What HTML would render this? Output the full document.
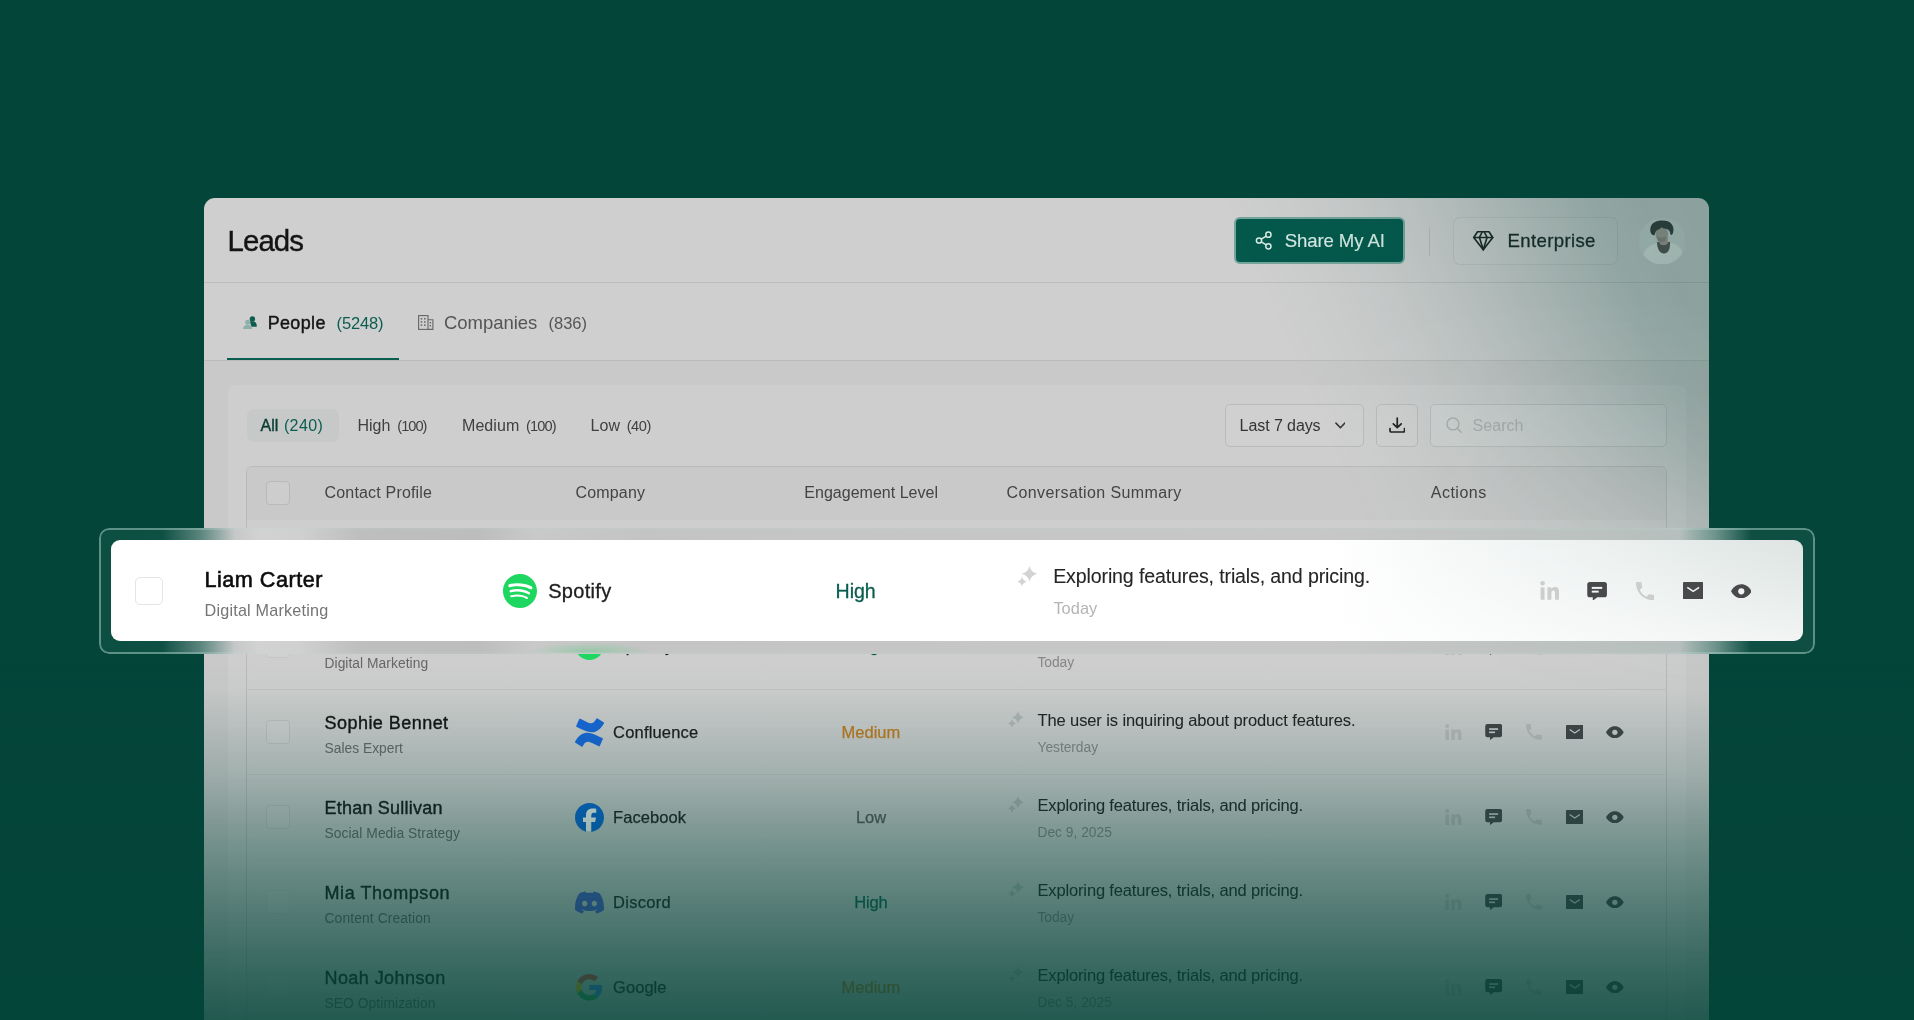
<!DOCTYPE html>
<html lang="en">
<head>
<meta charset="utf-8">
<title>Leads</title>
<style>
*{box-sizing:border-box;margin:0;padding:0}
html,body{width:1914px;height:1020px;overflow:hidden}
body{background:#04453a;font-family:"Liberation Sans",sans-serif;position:relative}
.abs{position:absolute}
.t{position:absolute;white-space:nowrap;line-height:1}
#cardclip{position:absolute;left:204px;top:198px;width:1505px;height:830px;border-radius:11px 11px 0 0;overflow:hidden}
#cardin{position:absolute;left:-204px;top:-198px;width:1914px;height:1020px;will-change:transform}
#hlwrap{position:absolute;left:0;top:0;width:1914px;height:1020px;will-change:transform}
#cardbg{position:absolute;left:204px;top:198px;width:1505px;height:830px;background:#cfcfcf}
.hline{position:absolute;left:204px;width:1505px;height:1px;background:#bcbcbc}
#band{position:absolute;left:204px;top:361px;width:1505px;height:700px;background:#c9c9c9}
#panel{position:absolute;left:228px;top:385px;width:1458px;height:700px;background:#cecece;border-radius:8px}
#table{position:absolute;left:246px;top:466px;width:1421px;height:700px;border:1px solid #b9b9b9;border-radius:6px;background:#cecece;overflow:hidden}
#thead{position:absolute;left:0;top:0;width:1421px;height:53px;background:#c9c9c9}
.cb{position:absolute;left:266px;width:24px;height:24px;border:1px solid #bcbcbc;border-radius:4px;background:#d1d1d1}
.rowline{position:absolute;left:247px;width:1419px;height:1px;background:#c1c1c1}
.box{position:absolute;border:1px solid #bbb;border-radius:5px;background:#d0d0d0}
#tint{position:absolute;left:204px;top:198px;width:1505px;height:830px;pointer-events:none;background:linear-gradient(246.3deg,rgba(4,69,58,0.335) 0.00%,rgba(4,69,58,0.33) 3.21%,rgba(4,69,58,0.3) 6.42%,rgba(4,69,58,0.235) 9.63%,rgba(4,69,58,0.17) 12.84%,rgba(4,69,58,0.11) 16.05%,rgba(4,69,58,0.06) 19.26%,rgba(4,69,58,0.02) 23.00%,rgba(4,69,58,0) 26.21%);-webkit-mask-image:linear-gradient(180deg,rgba(0,0,0,1) 0.00%,rgba(0,0,0,1) 12.29%,rgba(0,0,0,0.9) 24.34%,rgba(0,0,0,0.78) 30.96%,rgba(0,0,0,0.56) 38.80%,rgba(0,0,0,0.25) 48.43%,rgba(0,0,0,0.07) 55.66%,rgba(0,0,0,0) 60.48%);mask-image:linear-gradient(180deg,rgba(0,0,0,1) 0.00%,rgba(0,0,0,1) 12.29%,rgba(0,0,0,0.9) 24.34%,rgba(0,0,0,0.78) 30.96%,rgba(0,0,0,0.56) 38.80%,rgba(0,0,0,0.25) 48.43%,rgba(0,0,0,0.07) 55.66%,rgba(0,0,0,0) 60.48%)}
#fade{position:absolute;left:0;top:660px;width:1914px;height:360px;pointer-events:none;background:linear-gradient(180deg,rgba(4,69,58,0) 0.0%,rgba(4,69,58,0.02) 8.3%,rgba(4,69,58,0.12) 20.3%,rgba(4,69,58,0.22) 31.9%,rgba(4,69,58,0.38) 46.1%,rgba(4,69,58,0.5) 58.3%,rgba(4,69,58,0.63) 72.2%,rgba(4,69,58,0.75) 86.1%,rgba(4,69,58,0.85) 100.0%)}
#glass{position:absolute;left:99px;top:528px;width:1716px;height:125.500px;border-radius:10px;background:linear-gradient(90deg,#0d4e43 0.00%,#0f5045 3.70%,#5a857d 5.90%,#c6c8c8 7.93%,#d2d2d2 9.33%,#d0d0d0 11.67%,#bebebe 15.17%,#bdbdbd 22.17%,#c9c9c9 25.38%,#c4c4c4 31.51%,#c6c6c6 52.51%,#c7c7c7 71.18%,#bcc2c0 85.18%,#b6bfbd 92.10%,#6d948c 94.20%,#0e4e43 96.30%,#0e4e43 100.00%)}
#glassb{position:absolute;left:99px;top:528px;width:1716px;height:125.500px;border-radius:10px;border:2px solid rgba(190,226,218,.45);-webkit-mask-image:linear-gradient(90deg,#000 0%,#000 4%,rgba(0,0,0,.3) 9%,rgba(0,0,0,.3) 91%,#000 95.5%,#000 100%);mask-image:linear-gradient(90deg,#000 0%,#000 4%,rgba(0,0,0,.3) 9%,rgba(0,0,0,.3) 91%,#000 95.5%,#000 100%)}
#hl{position:absolute;left:111px;top:540px;width:1692px;height:101px;border-radius:9px;background:linear-gradient(180deg,rgba(255,255,255,0) 0%,rgba(255,255,255,.25) 45%,rgba(255,255,255,.6) 100%),linear-gradient(90deg,#fff 0%,#fff 72%,#f6f8f8 79%,#eaefee 90%,#dde4e2 100%)}
.hcb{position:absolute;left:135.200px;top:577px;width:27.600px;height:27.600px;border:1px solid #e4e4e4;border-radius:5px;background:#fff}
</style>
</head>
<body>
<div id="cardclip"><div id="cardin">
<div id="cardbg"></div>
<div class="hline" style="top:282px"></div>
<div class="hline" style="top:360px"></div>
<div id="band"></div><div id="panel"></div>
<div id="table"><div id="thead"></div></div>
<div class="abs" style="left:227px;top:357.500px;width:171.500px;height:2.500px;background:#0b5e4f"></div>
<div class="abs" style="left:1234px;top:217px;width:171px;height:47px;border-radius:6px;background:#04594c;border:2px solid #74a59b"></div>
<svg class="abs" style="left:1254.5px;top:231.0px" width="18.0" height="19.0" viewBox="0 0 18 19" ><g fill="none" stroke="#d9ebe7" stroke-width="1.500"><circle cx="13.400" cy="3.700" r="2.600"/><circle cx="4" cy="9.500" r="2.600"/><circle cx="13.400" cy="15.300" r="2.600"/><path d="M6.300 8.100l4.900-3M6.300 10.900l4.900 3"/></g></svg>
<div class="abs" style="left:1429px;top:228px;width:1px;height:28px;background:#b4bcba"></div>
<div class="abs" style="left:1452.500px;top:216.500px;width:165px;height:48px;border-radius:7px;border:1px solid rgba(110,135,130,.17);background:rgba(255,255,255,.04)"></div>
<svg class="abs" style="left:1471.7px;top:231.4px" width="22.5" height="19.6" viewBox="1.500 2.200 21 20.600" ><g fill="none" stroke="#1b2422" stroke-width="1.700" stroke-linejoin="round" stroke-linecap="round"><path d="M6 3h12l4 6-10 13L2 9Z"/><path d="M11 3 8 9l4 13 4-13-3-6"/><path d="M2 9h20"/></g></svg>
<svg class="abs" style="left:1638.5px;top:217.5px" width="46.5" height="46.5" viewBox="0 0 46.500 46.500" ><defs><clipPath id="av"><circle cx="23.250" cy="23.250" r="23.250"/></clipPath></defs><g clip-path="url(#av)"><rect width="46.500" height="46.500" fill="#d4d7d6"/><path d="M3 47C3 34 8 27.500 17 25.500L20 24.500C22 30 28 30 31 24.500L34 25.500C42 27.500 45 34 45 47Z" fill="#e9e9e7"/><path d="M18 24C18 31 21 35.500 25 35.500C29 35.500 31.500 31 31 24Z" fill="#5d5252"/><path d="M20.500 19h8.300v6.500c-2 2.200-6.300 2.200-8.300 0z" fill="#b39a96"/><ellipse cx="22.800" cy="15.800" rx="6.200" ry="8.500" fill="#ad9d98"/><path d="M18 18.500c2.500 1.500 6.500 1.500 9 0l-.8 4.500c-2 1.500-5.500 1.500-7.500 0z" fill="#8d7f7b" opacity=".7"/><path d="M11.400 13.500C10.300 6 16 2.300 23 2.500C30.500 2.300 35.600 6.500 34.300 13.500C34 16 33 17.200 31.600 16.800C31.300 14 30.500 12.500 28.500 11.300C26.500 10.300 24 11 22.800 9.300C21.500 11 18.800 11.500 17.300 12.800C16.300 14 16.300 15.500 15.500 17.200C13.500 17.500 11.800 16 11.400 13.500Z" fill="#3a3839"/></g></svg>
<svg class="abs" style="left:242.5px;top:315.5px" width="14.5" height="13.5" viewBox="0 0 14.500 13.500" ><g><circle cx="9.400" cy="2.900" r="2.700" fill="#0b5e4f"/><path d="M6.800 5.500c1.600-.6 4.200-.4 5.400.6 1.300 1.100 1.700 3 1.600 4.600h-5.300z" fill="#0b5e4f"/><circle cx="4.600" cy="6.300" r="2.500" fill="#8fb0a9"/><path d="M0 13.500c0-2.900 1.800-4.800 4.600-4.800s4.600 1.900 4.600 4.800z" fill="#8fb0a9"/></g></svg>
<svg class="abs" style="left:418.0px;top:315.0px" width="15.5" height="15.0" viewBox="0 0 15.500 15" ><g fill="none" stroke="#666" stroke-width="1.100"><rect x=".6" y=".6" width="9.400" height="13.800"/><path d="M10 4.800h4.900v9.600H10"/></g><g fill="#666"><rect x="2.700" y="3" width="1.600" height="1.500"/><rect x="6" y="3" width="1.600" height="1.500"/><rect x="2.700" y="6.200" width="1.600" height="1.500"/><rect x="6" y="6.200" width="1.600" height="1.500"/><rect x="2.700" y="9.400" width="1.600" height="1.500"/><rect x="6" y="9.400" width="1.600" height="1.500"/><rect x="11.600" y="7" width="1.500" height="1.400"/><rect x="11.600" y="10" width="1.500" height="1.400"/></g></svg>
<div class="abs" style="left:246.500px;top:409px;width:92px;height:33px;border-radius:7px;background:#c7c8c8"></div>
<div class="box" style="left:1225px;top:404px;width:139px;height:43px"></div>
<svg class="abs" style="left:1334.6px;top:421.8px" width="10.8" height="7.1" viewBox="0 0 11.500 7.500" ><path d="M1 1.200l4.750 4.800L10.500 1.200" fill="none" stroke="#333" stroke-width="1.600" stroke-linecap="round" stroke-linejoin="round"/></svg>
<div class="box" style="left:1375.500px;top:404px;width:42.500px;height:43px"></div>
<svg class="abs" style="left:1388.5px;top:416.8px" width="16.5" height="16.0" viewBox="0 0 16.500 16" ><g fill="none" stroke="#222" stroke-width="1.700" stroke-linecap="round" stroke-linejoin="round"><path d="M8.250 1v9.500M4.300 6.800l3.950 3.900 3.950-3.900M1 11.500v2.300a1.200 1.200 0 0 0 1.200 1.200h12.100a1.200 1.200 0 0 0 1.200-1.200v-2.300"/></g></svg>
<div class="box" style="left:1430px;top:404px;width:237px;height:43px;border-color:#b9bebd;background:rgba(212,214,214,.55)"></div>
<svg class="abs" style="left:1445.5px;top:416.9px" width="16.2" height="16.2" viewBox="0 0 17 17" ><g fill="none" stroke="#a9aead" stroke-width="1.400" stroke-linecap="round"><circle cx="7.300" cy="7.300" r="6.300"/><path d="M12 12l4 4"/></g></svg>
<div class="cb" style="top:480.500px;background:#cdcdcd;border-color:#b9b9b9"></div>
<div class="cb" style="top:633.7px;border-color:#c6c6c6"></div>
<svg class="abs" style="left:575.0px;top:631.2px" width="29.0" height="29.0" viewBox="0 0 24 24" ><circle cx="12" cy="12" r="11.5" fill="#fff"/><path fill="#1ed760" d="M12 0C5.4 0 0 5.4 0 12s5.4 12 12 12 12-5.4 12-12S18.66 0 12 0zm5.521 17.34c-.24.359-.66.48-1.021.24-2.82-1.74-6.36-2.101-10.561-1.141-.418.122-.779-.179-.899-.539-.12-.421.18-.78.54-.9 4.56-1.021 8.52-.6 11.64 1.32.42.18.479.659.301 1.02zm1.44-3.3c-.301.42-.841.6-1.262.3-3.239-1.98-8.159-2.58-11.939-1.38-.479.12-1.02-.12-1.14-.6-.12-.48.12-1.021.6-1.141C9.6 9.9 15 10.561 18.72 12.84c.361.181.54.78.241 1.2zm.12-3.36C15.24 8.4 8.82 8.16 5.16 9.301c-.6.179-1.2-.181-1.38-.721-.18-.601.18-1.2.72-1.381 4.26-1.26 11.28-1.02 15.721 1.621.539.3.719 1.02.419 1.56-.299.421-1.02.599-1.559.3z"/></svg>
<svg class="abs" style="left:1007.8px;top:626.4px" width="16.5" height="16.5" viewBox="0 0 16.500 16.500" ><g fill="#b0b5b4"><path d="M10 0.0Q11.15 5.15 16.3 6.3Q11.15 7.449999999999999 10 12.6Q8.85 7.449999999999999 3.7 6.3Q8.85 5.15 10 0.0Z"/><path d="M4 8.6Q4.8 11.7 7.9 12.5Q4.8 13.3 4 16.4Q3.2 13.3 0.10000000000000009 12.5Q3.2 11.7 4 8.6Z"/></g></svg>
<svg class="abs" style="left:1445.2px;top:638.9px" width="16.5" height="16.2" viewBox="0 0 19 19" ><g fill="#b9b9b9"><circle cx="2.4" cy="2.3" r="2.3"/><rect x="0.4" y="6.4" width="4" height="12.6"/><path d="M7.3 6.4h3.8v1.8c.7-1.2 2-2.1 3.9-2.1 3.3 0 4 2.2 4 5.2V19h-4v-6.8c0-1.5-.3-2.6-1.7-2.6-1.500 0-2 1.100-2 2.600V19h-4z"/></g></svg>
<svg class="abs" style="left:1484.9px;top:639.1px" width="17.4" height="16.1" viewBox="0 0 20 19" ><path fill="#434446" d="M2.6 0h14.800a2.600 2.600 0 0 1 2.600 2.600v10.400a2.600 2.600 0 0 1 -2.600 2.600H10.200L5.600 19v-3.400H2.600a2.600 2.600 0 0 1 -2.600 -2.600V2.600a2.600 2.600 0 0 1 2.600 -2.600z"/><rect x="4.600" y="5" width="10.600" height="2" fill="#cecece"/><rect x="4.600" y="8.800" width="7" height="2" fill="#cecece"/></svg>
<svg class="abs" style="left:1526.3px;top:639.1px" width="15.8" height="15.8" viewBox="3 3 18 18" ><path fill="#b9b9b9" d="M6.62 10.790c1.440 2.830 3.760 5.140 6.590 6.590l2.200-2.200c.27-.27.67-.36 1.020-.24 1.120.37 2.330.57 3.570.57.55 0 1 .45 1 1V20c0 .55-.45 1-1 1-9.390 0-17-7.610-17-17 0-.55.45-1 1-1h3.500c.55 0 1 .45 1 1 0 1.250.2 2.450.57 3.570.11.35.03.74-.25 1.020l-2.200 2.200z"/></svg>
<svg class="abs" style="left:1565.7px;top:639.6px" width="17.5" height="14.9" viewBox="0 0 20 17" ><rect x="0" y="0" width="20" height="17" rx="1" fill="#434446"/><path d="M4.200 5.200l5.800 4 5.800-4" fill="none" stroke="#cecece" stroke-width="1.500"/></svg>
<svg class="abs" style="left:1605.9px;top:640.7px" width="17.7" height="12.6" viewBox="0 0 22 15" ><path fill="#434446" d="M11 0C6 0 2.200 3.300 0 7.500C2.200 11.700 6 15 11 15C16 15 19.800 11.700 22 7.500C19.800 3.300 16 0 11 0z"/><circle cx="11" cy="7.500" r="3.300" fill="#cecece"/></svg>
<div class="rowline" style="top:689px;background:#c2c2c2"></div>
<div class="cb" style="top:720px;border-color:#c0c0c0"></div>
<svg class="abs" style="left:575.0px;top:717.5px" width="29.0" height="29.0" viewBox="0 0 24 24" ><path fill="#1868db" d="M.87 18.257c-.248.382-.53.875-.763 1.245a.764.764 0 0 0 .255 1.04l4.965 3.054a.764.764 0 0 0 1.058-.26c.199-.332.454-.763.733-1.221 1.967-3.247 3.945-2.853 7.508-1.146l4.957 2.337a.764.764 0 0 0 1.028-.382l2.364-5.346a.764.764 0 0 0-.382-1 599.851 599.851 0 0 1-4.965-2.361C10.911 10.97 5.224 11.185.87 18.257zM23.131 5.743c.249-.405.531-.875.764-1.25a.764.764 0 0 0-.256-1.034L18.675.404a.764.764 0 0 0-1.058.26c-.195.335-.451.763-.734 1.225-1.966 3.246-3.945 2.85-7.508 1.146L4.437.694a.764.764 0 0 0-1.027.382L1.046 6.422a.764.764 0 0 0 .382 1c1.039.49 3.105 1.467 4.965 2.361 6.698 3.246 12.392 3.029 16.738-4.04z"/></svg>
<svg class="abs" style="left:1007.8px;top:711.4px" width="16.5" height="16.5" viewBox="0 0 16.500 16.500" ><g fill="#b0b5b4"><path d="M10 0.0Q11.15 5.15 16.3 6.3Q11.15 7.449999999999999 10 12.6Q8.85 7.449999999999999 3.7 6.3Q8.85 5.15 10 0.0Z"/><path d="M4 8.6Q4.8 11.7 7.9 12.5Q4.8 13.3 4 16.4Q3.2 13.3 0.10000000000000009 12.5Q3.2 11.7 4 8.6Z"/></g></svg>
<svg class="abs" style="left:1445.2px;top:723.9px" width="16.5" height="16.2" viewBox="0 0 19 19" ><g fill="#b9b9b9"><circle cx="2.4" cy="2.3" r="2.3"/><rect x="0.4" y="6.4" width="4" height="12.6"/><path d="M7.3 6.4h3.8v1.8c.7-1.2 2-2.1 3.9-2.1 3.3 0 4 2.2 4 5.2V19h-4v-6.8c0-1.5-.3-2.6-1.7-2.6-1.500 0-2 1.100-2 2.600V19h-4z"/></g></svg>
<svg class="abs" style="left:1484.9px;top:724.1px" width="17.4" height="16.1" viewBox="0 0 20 19" ><path fill="#434446" d="M2.6 0h14.800a2.600 2.600 0 0 1 2.600 2.600v10.400a2.600 2.600 0 0 1 -2.600 2.600H10.200L5.600 19v-3.400H2.600a2.600 2.600 0 0 1 -2.600 -2.600V2.600a2.600 2.600 0 0 1 2.600 -2.600z"/><rect x="4.600" y="5" width="10.600" height="2" fill="#cecece"/><rect x="4.600" y="8.800" width="7" height="2" fill="#cecece"/></svg>
<svg class="abs" style="left:1526.3px;top:724.1px" width="15.8" height="15.8" viewBox="3 3 18 18" ><path fill="#b9b9b9" d="M6.62 10.790c1.440 2.830 3.760 5.140 6.590 6.590l2.200-2.200c.27-.27.67-.36 1.020-.24 1.120.37 2.330.57 3.570.57.55 0 1 .45 1 1V20c0 .55-.45 1-1 1-9.390 0-17-7.610-17-17 0-.55.45-1 1-1h3.500c.55 0 1 .45 1 1 0 1.250.2 2.450.57 3.570.11.35.03.74-.25 1.020l-2.200 2.200z"/></svg>
<svg class="abs" style="left:1565.7px;top:724.6px" width="17.5" height="14.9" viewBox="0 0 20 17" ><rect x="0" y="0" width="20" height="17" rx="1" fill="#434446"/><path d="M4.200 5.200l5.800 4 5.800-4" fill="none" stroke="#cecece" stroke-width="1.500"/></svg>
<svg class="abs" style="left:1605.9px;top:725.7px" width="17.7" height="12.6" viewBox="0 0 22 15" ><path fill="#434446" d="M11 0C6 0 2.200 3.300 0 7.500C2.200 11.700 6 15 11 15C16 15 19.800 11.700 22 7.500C19.800 3.300 16 0 11 0z"/><circle cx="11" cy="7.500" r="3.300" fill="#cecece"/></svg>
<div class="rowline" style="top:774px;background:#c5c5c5"></div>
<div class="cb" style="top:805px;border-color:#c2c2c2"></div>
<svg class="abs" style="left:575.0px;top:802.5px" width="29.0" height="29.0" viewBox="0 0 24 24" ><circle cx="12" cy="12" r="11.5" fill="#fff"/><path fill="#0866d6" d="M9.101 23.691v-7.98H6.627v-3.667h2.474v-1.58c0-4.085 1.848-5.978 5.858-5.978.401 0 .955.042 1.468.103a8.68 8.68 0 0 1 1.141.195v3.325a8.623 8.623 0 0 0-.653-.036 26.805 26.805 0 0 0-.733-.009c-.707 0-1.259.096-1.675.309a1.686 1.686 0 0 0-.679.622c-.258.42-.374.995-.374 1.752v1.297h3.919l-.386 2.103-.287 1.564h-3.246v8.245C19.396 23.238 24 18.179 24 12.044c0-6.627-5.373-12-12-12s-12 5.373-12 12c0 5.628 3.874 10.35 9.101 11.647Z"/></svg>
<svg class="abs" style="left:1007.8px;top:796.4px" width="16.5" height="16.5" viewBox="0 0 16.500 16.500" ><g fill="#b0b5b4"><path d="M10 0.0Q11.15 5.15 16.3 6.3Q11.15 7.449999999999999 10 12.6Q8.85 7.449999999999999 3.7 6.3Q8.85 5.15 10 0.0Z"/><path d="M4 8.6Q4.8 11.7 7.9 12.5Q4.8 13.3 4 16.4Q3.2 13.3 0.10000000000000009 12.5Q3.2 11.7 4 8.6Z"/></g></svg>
<svg class="abs" style="left:1445.2px;top:808.9px" width="16.5" height="16.2" viewBox="0 0 19 19" ><g fill="#b9b9b9"><circle cx="2.4" cy="2.3" r="2.3"/><rect x="0.4" y="6.4" width="4" height="12.6"/><path d="M7.3 6.4h3.8v1.8c.7-1.2 2-2.1 3.9-2.1 3.3 0 4 2.2 4 5.2V19h-4v-6.8c0-1.5-.3-2.6-1.7-2.6-1.500 0-2 1.100-2 2.600V19h-4z"/></g></svg>
<svg class="abs" style="left:1484.9px;top:809.1px" width="17.4" height="16.1" viewBox="0 0 20 19" ><path fill="#434446" d="M2.6 0h14.800a2.600 2.600 0 0 1 2.600 2.600v10.400a2.600 2.600 0 0 1 -2.600 2.600H10.200L5.600 19v-3.400H2.600a2.600 2.600 0 0 1 -2.600 -2.600V2.600a2.600 2.600 0 0 1 2.600 -2.600z"/><rect x="4.600" y="5" width="10.600" height="2" fill="#cecece"/><rect x="4.600" y="8.800" width="7" height="2" fill="#cecece"/></svg>
<svg class="abs" style="left:1526.3px;top:809.1px" width="15.8" height="15.8" viewBox="3 3 18 18" ><path fill="#b9b9b9" d="M6.62 10.790c1.440 2.830 3.760 5.140 6.590 6.590l2.200-2.200c.27-.27.67-.36 1.020-.24 1.120.37 2.330.57 3.570.57.55 0 1 .45 1 1V20c0 .55-.45 1-1 1-9.390 0-17-7.610-17-17 0-.55.45-1 1-1h3.500c.55 0 1 .45 1 1 0 1.250.2 2.450.57 3.570.11.35.03.74-.25 1.020l-2.200 2.200z"/></svg>
<svg class="abs" style="left:1565.7px;top:809.6px" width="17.5" height="14.9" viewBox="0 0 20 17" ><rect x="0" y="0" width="20" height="17" rx="1" fill="#434446"/><path d="M4.200 5.200l5.800 4 5.800-4" fill="none" stroke="#cecece" stroke-width="1.500"/></svg>
<svg class="abs" style="left:1605.9px;top:810.7px" width="17.7" height="12.6" viewBox="0 0 22 15" ><path fill="#434446" d="M11 0C6 0 2.200 3.300 0 7.500C2.200 11.700 6 15 11 15C16 15 19.800 11.700 22 7.500C19.800 3.300 16 0 11 0z"/><circle cx="11" cy="7.500" r="3.300" fill="#cecece"/></svg>
<div class="rowline" style="top:859px;background:#cbcbcb"></div>
<div class="cb" style="top:890px;border-color:#c8c8c8"></div>
<svg class="abs" style="left:575.0px;top:887.5px" width="29.0" height="29.0" viewBox="0 0 24 24" ><path fill="#4b5bd0" d="M20.317 4.3698a19.7913 19.7913 0 00-4.8851-1.5152.0741.0741 0 00-.0785.0371c-.211.3753-.4447.8648-.6083 1.2495-1.8447-.2762-3.68-.2762-5.4868 0-.1636-.3933-.4058-.8742-.6177-1.2495a.077.077 0 00-.0785-.037 19.7363 19.7363 0 00-4.8852 1.515.0699.0699 0 00-.0321.0277C.5334 9.0458-.319 13.5799.0992 18.0578a.0824.0824 0 00.0312.0561c2.0528 1.5076 4.0413 2.4228 5.9929 3.0294a.0777.0777 0 00.0842-.0276c.4616-.6304.8731-1.2952 1.226-1.9942a.076.076 0 00-.0416-.1057c-.6528-.2476-1.2743-.5495-1.8722-.8923a.077.077 0 01-.0076-.1277c.1258-.0943.2517-.1923.3718-.2914a.0743.0743 0 01.0776-.0105c3.9278 1.7933 8.18 1.7933 12.0614 0a.0739.0739 0 01.0785.0095c.1202.099.246.1981.3728.2924a.077.077 0 01-.0066.1276 12.2986 12.2986 0 01-1.873.8914.0766.0766 0 00-.0407.1067c.3604.698.7719 1.3628 1.225 1.9932a.076.076 0 00.0842.0286c1.961-.6067 3.9495-1.5219 6.0023-3.0294a.077.077 0 00.0313-.0552c.5004-5.177-.8382-9.6739-3.5485-13.6604a.061.061 0 00-.0312-.0286zM8.02 15.3312c-1.1825 0-2.1569-1.0857-2.1569-2.419 0-1.3332.9555-2.4189 2.157-2.4189 1.2108 0 2.1757 1.0952 2.1568 2.419 0 1.3332-.9555 2.4189-2.1569 2.4189zm7.9748 0c-1.1825 0-2.1569-1.0857-2.1569-2.419 0-1.3332.9554-2.4189 2.1569-2.4189 1.2108 0 2.1757 1.0952 2.1568 2.419 0 1.3332-.946 2.4189-2.1568 2.4189Z"/></svg>
<svg class="abs" style="left:1007.8px;top:881.4px" width="16.5" height="16.5" viewBox="0 0 16.500 16.500" ><g fill="#b0b5b4"><path d="M10 0.0Q11.15 5.15 16.3 6.3Q11.15 7.449999999999999 10 12.6Q8.85 7.449999999999999 3.7 6.3Q8.85 5.15 10 0.0Z"/><path d="M4 8.6Q4.8 11.7 7.9 12.5Q4.8 13.3 4 16.4Q3.2 13.3 0.10000000000000009 12.5Q3.2 11.7 4 8.6Z"/></g></svg>
<svg class="abs" style="left:1445.2px;top:893.9px" width="16.5" height="16.2" viewBox="0 0 19 19" ><g fill="#b9b9b9"><circle cx="2.4" cy="2.3" r="2.3"/><rect x="0.4" y="6.4" width="4" height="12.6"/><path d="M7.3 6.4h3.8v1.8c.7-1.2 2-2.1 3.9-2.1 3.3 0 4 2.2 4 5.2V19h-4v-6.8c0-1.5-.3-2.6-1.7-2.6-1.500 0-2 1.100-2 2.600V19h-4z"/></g></svg>
<svg class="abs" style="left:1484.9px;top:894.1px" width="17.4" height="16.1" viewBox="0 0 20 19" ><path fill="#434446" d="M2.6 0h14.800a2.600 2.600 0 0 1 2.600 2.600v10.400a2.600 2.600 0 0 1 -2.600 2.600H10.200L5.600 19v-3.400H2.600a2.600 2.600 0 0 1 -2.600 -2.600V2.600a2.600 2.600 0 0 1 2.600 -2.600z"/><rect x="4.600" y="5" width="10.600" height="2" fill="#cecece"/><rect x="4.600" y="8.800" width="7" height="2" fill="#cecece"/></svg>
<svg class="abs" style="left:1526.3px;top:894.1px" width="15.8" height="15.8" viewBox="3 3 18 18" ><path fill="#b9b9b9" d="M6.62 10.790c1.440 2.830 3.760 5.140 6.590 6.590l2.200-2.200c.27-.27.67-.36 1.020-.24 1.120.37 2.330.57 3.570.57.55 0 1 .45 1 1V20c0 .55-.45 1-1 1-9.390 0-17-7.610-17-17 0-.55.45-1 1-1h3.500c.55 0 1 .45 1 1 0 1.250.2 2.450.57 3.570.11.35.03.74-.25 1.020l-2.200 2.200z"/></svg>
<svg class="abs" style="left:1565.7px;top:894.6px" width="17.5" height="14.9" viewBox="0 0 20 17" ><rect x="0" y="0" width="20" height="17" rx="1" fill="#434446"/><path d="M4.200 5.200l5.800 4 5.800-4" fill="none" stroke="#cecece" stroke-width="1.500"/></svg>
<svg class="abs" style="left:1605.9px;top:895.7px" width="17.7" height="12.6" viewBox="0 0 22 15" ><path fill="#434446" d="M11 0C6 0 2.200 3.300 0 7.500C2.200 11.700 6 15 11 15C16 15 19.800 11.700 22 7.500C19.800 3.300 16 0 11 0z"/><circle cx="11" cy="7.500" r="3.300" fill="#cecece"/></svg>
<div class="rowline" style="top:944px;background:#cdcdcd"></div>
<div class="cb" style="top:975px;border-color:#cbcbcb"></div>
<svg class="abs" style="left:575.8px;top:974.1px" width="26.6" height="26.6" viewBox="0 0 48 48" ><path fill="#EA4335" d="M24 9.5c3.54 0 6.71 1.22 9.21 3.6l6.85-6.85C35.9 2.38 30.47 0 24 0 14.62 0 6.51 5.38 2.56 13.22l7.98 6.19C12.43 13.72 17.74 9.5 24 9.5z"/><path fill="#4285F4" d="M46.98 24.55c0-1.57-.15-3.09-.38-4.55H24v9.02h12.94c-.58 2.96-2.26 5.48-4.78 7.18l7.73 6c4.51-4.18 7.09-10.36 7.09-17.65z"/><path fill="#FBBC05" d="M10.53 28.59c-.48-1.45-.76-2.99-.76-4.59s.27-3.14.76-4.59l-7.98-6.19C.92 16.46 0 20.12 0 24c0 3.88.92 7.54 2.56 10.78l7.97-6.19z"/><path fill="#34A853" d="M24 48c6.48 0 11.93-2.13 15.89-5.81l-7.73-6c-2.15 1.45-4.92 2.3-8.16 2.3-6.26 0-11.57-4.22-13.47-9.91l-7.98 6.19C6.51 42.62 14.62 48 24 48z"/></svg>
<svg class="abs" style="left:1007.8px;top:966.4px" width="16.5" height="16.5" viewBox="0 0 16.500 16.500" ><g fill="#b0b5b4"><path d="M10 0.0Q11.15 5.15 16.3 6.3Q11.15 7.449999999999999 10 12.6Q8.85 7.449999999999999 3.7 6.3Q8.85 5.15 10 0.0Z"/><path d="M4 8.6Q4.8 11.7 7.9 12.5Q4.8 13.3 4 16.4Q3.2 13.3 0.10000000000000009 12.5Q3.2 11.7 4 8.6Z"/></g></svg>
<svg class="abs" style="left:1445.2px;top:978.9px" width="16.5" height="16.2" viewBox="0 0 19 19" ><g fill="#b9b9b9"><circle cx="2.4" cy="2.3" r="2.3"/><rect x="0.4" y="6.4" width="4" height="12.6"/><path d="M7.3 6.4h3.8v1.8c.7-1.2 2-2.1 3.9-2.1 3.3 0 4 2.2 4 5.2V19h-4v-6.8c0-1.5-.3-2.6-1.7-2.6-1.500 0-2 1.100-2 2.600V19h-4z"/></g></svg>
<svg class="abs" style="left:1484.9px;top:979.1px" width="17.4" height="16.1" viewBox="0 0 20 19" ><path fill="#434446" d="M2.6 0h14.800a2.600 2.600 0 0 1 2.600 2.600v10.400a2.600 2.600 0 0 1 -2.600 2.600H10.200L5.600 19v-3.400H2.600a2.600 2.600 0 0 1 -2.600 -2.600V2.600a2.600 2.600 0 0 1 2.600 -2.600z"/><rect x="4.600" y="5" width="10.600" height="2" fill="#cecece"/><rect x="4.600" y="8.800" width="7" height="2" fill="#cecece"/></svg>
<svg class="abs" style="left:1526.3px;top:979.1px" width="15.8" height="15.8" viewBox="3 3 18 18" ><path fill="#b9b9b9" d="M6.62 10.790c1.440 2.830 3.760 5.140 6.590 6.590l2.200-2.200c.27-.27.67-.36 1.020-.24 1.120.37 2.330.57 3.570.57.55 0 1 .45 1 1V20c0 .55-.45 1-1 1-9.390 0-17-7.610-17-17 0-.55.45-1 1-1h3.500c.55 0 1 .45 1 1 0 1.250.2 2.450.57 3.570.11.35.03.74-.25 1.020l-2.200 2.200z"/></svg>
<svg class="abs" style="left:1565.7px;top:979.6px" width="17.5" height="14.9" viewBox="0 0 20 17" ><rect x="0" y="0" width="20" height="17" rx="1" fill="#434446"/><path d="M4.200 5.200l5.800 4 5.800-4" fill="none" stroke="#cecece" stroke-width="1.500"/></svg>
<svg class="abs" style="left:1605.9px;top:980.7px" width="17.7" height="12.6" viewBox="0 0 22 15" ><path fill="#434446" d="M11 0C6 0 2.200 3.300 0 7.500C2.200 11.700 6 15 11 15C16 15 19.800 11.700 22 7.500C19.800 3.300 16 0 11 0z"/><circle cx="11" cy="7.500" r="3.300" fill="#cecece"/></svg>
<div class="t" style="left:227.5px;top:225.9px;font-size:29.4px;color:#141414;letter-spacing:-0.89px;-webkit-text-stroke:0.4px #141414">Leads</div>
<div class="t" style="left:267.7px;top:314.6px;font-size:17.9px;color:#151515;letter-spacing:0.40px;-webkit-text-stroke:0.45px #151515">People</div>
<div class="t" style="left:336.6px;top:314.7px;font-size:16.5px;color:#0b5e4f;letter-spacing:-0.16px">(5248)</div>
<div class="t" style="left:444.0px;top:314.3px;font-size:18.5px;color:#555;letter-spacing:-0.03px">Companies</div>
<div class="t" style="left:548.5px;top:314.7px;font-size:16.5px;color:#555;letter-spacing:-0.01px">(836)</div>
<div class="t" style="left:1284.7px;top:231.9px;font-size:18.6px;color:#d9ebe7;letter-spacing:-0.10px;-webkit-text-stroke:0.12px #d9ebe7">Share My AI</div>
<div class="t" style="left:1507.6px;top:231.9px;font-size:18.6px;color:#1b2422;letter-spacing:0.34px;-webkit-text-stroke:0.3px #1b2422">Enterprise</div>
<div class="t" style="left:260.6px;top:417.9px;font-size:16px;color:#0a3d33;letter-spacing:-0.09px;-webkit-text-stroke:0.4px #0a3d33">All</div>
<div class="t" style="left:283.9px;top:417.9px;font-size:16px;color:#0b5e4f;letter-spacing:0.39px">(240)</div>
<div class="t" style="left:357.4px;top:417.9px;font-size:16px;color:#404040;letter-spacing:0.06px">High</div>
<div class="t" style="left:397.3px;top:418.9px;font-size:14.6px;color:#404040;letter-spacing:-0.99px">(100)</div>
<div class="t" style="left:462.0px;top:417.9px;font-size:16px;color:#404040;letter-spacing:0.06px">Medium</div>
<div class="t" style="left:526.0px;top:418.9px;font-size:14.6px;color:#404040;letter-spacing:-0.89px">(100)</div>
<div class="t" style="left:590.6px;top:417.9px;font-size:16px;color:#404040;letter-spacing:0.02px">Low</div>
<div class="t" style="left:626.7px;top:418.9px;font-size:14.6px;color:#404040;letter-spacing:-0.45px">(40)</div>
<div class="t" style="left:1239.6px;top:417.9px;font-size:16px;color:#333;letter-spacing:-0.08px">Last 7 days</div>
<div class="t" style="left:1472.6px;top:417.9px;font-size:16px;color:#adb1b0;letter-spacing:0.04px">Search</div>
<div class="t" style="left:324.5px;top:484.5px;font-size:16px;color:#444;letter-spacing:0.18px">Contact Profile</div>
<div class="t" style="left:575.6px;top:484.5px;font-size:16px;color:#444;letter-spacing:0.15px">Company</div>
<div class="t" style="left:804.3px;top:484.5px;font-size:16px;color:#444;letter-spacing:0.02px">Engagement Level</div>
<div class="t" style="left:1006.5px;top:484.5px;font-size:16px;color:#444;letter-spacing:0.40px">Conversation Summary</div>
<div class="t" style="left:1430.7px;top:484.5px;font-size:16px;color:#444;letter-spacing:0.52px">Actions</div>
<div class="t" style="left:324.5px;top:629.3px;font-size:18px;color:#131313;letter-spacing:1.15px;-webkit-text-stroke:0.4px #131313">Liam Carter</div>
<div class="t" style="left:324.5px;top:657.3px;font-size:13.8px;color:#676767;letter-spacing:0.05px">Digital Marketing</div>
<div class="t" style="left:613.1px;top:637.5px;font-size:16.5px;color:#1c1c1c;letter-spacing:1.60px;-webkit-text-stroke:0.25px #1c1c1c">Spotify</div>
<div class="t" style="left:854.2px;top:637.5px;font-size:16.5px;color:#0b5e4f;letter-spacing:-0.15px;-webkit-text-stroke:0.25px #0b5e4f">High</div>
<div class="t" style="left:1037.5px;top:626.8px;font-size:16.5px;color:#232323;letter-spacing:-0.15px;-webkit-text-stroke:0.05px #232323">Exploring features, trials, and pricing.</div>
<div class="t" style="left:1037.5px;top:655.6px;font-size:13.8px;color:#868686;letter-spacing:-0.06px">Today</div>
<div class="t" style="left:324.5px;top:714.3px;font-size:18px;color:#131313;letter-spacing:0.46px;-webkit-text-stroke:0.4px #131313">Sophie Bennet</div>
<div class="t" style="left:324.5px;top:742.3px;font-size:13.8px;color:#676767;letter-spacing:0.02px">Sales Expert</div>
<div class="t" style="left:613.1px;top:723.8px;font-size:16.5px;color:#1c1c1c;letter-spacing:0.18px;-webkit-text-stroke:0.25px #1c1c1c">Confluence</div>
<div class="t" style="left:841.6px;top:723.8px;font-size:16.5px;color:#c2791d;letter-spacing:0.00px;-webkit-text-stroke:0.25px #c2791d">Medium</div>
<div class="t" style="left:1037.5px;top:711.8px;font-size:16.5px;color:#232323;letter-spacing:-0.11px;-webkit-text-stroke:0.05px #232323">The user is inquiring about product features.</div>
<div class="t" style="left:1037.5px;top:740.6px;font-size:13.8px;color:#868686;letter-spacing:-0.04px">Yesterday</div>
<div class="t" style="left:324.5px;top:799.3px;font-size:18px;color:#131313;letter-spacing:0.22px;-webkit-text-stroke:0.4px #131313">Ethan Sullivan</div>
<div class="t" style="left:324.5px;top:827.3px;font-size:13.8px;color:#676767;letter-spacing:0.06px">Social Media Strategy</div>
<div class="t" style="left:613.1px;top:808.8px;font-size:16.5px;color:#1c1c1c;letter-spacing:0.05px;-webkit-text-stroke:0.25px #1c1c1c">Facebook</div>
<div class="t" style="left:856.0px;top:808.8px;font-size:16.5px;color:#585858;letter-spacing:-0.09px;-webkit-text-stroke:0.25px #585858">Low</div>
<div class="t" style="left:1037.5px;top:796.8px;font-size:16.5px;color:#232323;letter-spacing:-0.15px;-webkit-text-stroke:0.05px #232323">Exploring features, trials, and pricing.</div>
<div class="t" style="left:1037.5px;top:825.6px;font-size:13.8px;color:#868686;letter-spacing:-0.01px">Dec 9, 2025</div>
<div class="t" style="left:324.5px;top:884.3px;font-size:18px;color:#131313;letter-spacing:0.57px;-webkit-text-stroke:0.4px #131313">Mia Thompson</div>
<div class="t" style="left:324.5px;top:912.3px;font-size:13.8px;color:#676767;letter-spacing:0.13px">Content Creation</div>
<div class="t" style="left:613.1px;top:893.8px;font-size:16.5px;color:#1c1c1c;letter-spacing:0.26px;-webkit-text-stroke:0.25px #1c1c1c">Discord</div>
<div class="t" style="left:854.2px;top:893.8px;font-size:16.5px;color:#0b5e4f;letter-spacing:-0.15px;-webkit-text-stroke:0.25px #0b5e4f">High</div>
<div class="t" style="left:1037.5px;top:881.8px;font-size:16.5px;color:#232323;letter-spacing:-0.15px;-webkit-text-stroke:0.05px #232323">Exploring features, trials, and pricing.</div>
<div class="t" style="left:1037.5px;top:910.6px;font-size:13.8px;color:#868686;letter-spacing:-0.06px">Today</div>
<div class="t" style="left:324.5px;top:969.3px;font-size:18px;color:#131313;letter-spacing:0.43px;-webkit-text-stroke:0.4px #131313">Noah Johnson</div>
<div class="t" style="left:324.5px;top:997.3px;font-size:13.8px;color:#676767;letter-spacing:0.08px">SEO Optimization</div>
<div class="t" style="left:613.1px;top:978.8px;font-size:16.5px;color:#1c1c1c;letter-spacing:0.04px;-webkit-text-stroke:0.25px #1c1c1c">Google</div>
<div class="t" style="left:841.6px;top:978.8px;font-size:16.5px;color:#c2791d;letter-spacing:0.00px;-webkit-text-stroke:0.25px #c2791d">Medium</div>
<div class="t" style="left:1037.5px;top:966.8px;font-size:16.5px;color:#232323;letter-spacing:-0.15px;-webkit-text-stroke:0.05px #232323">Exploring features, trials, and pricing.</div>
<div class="t" style="left:1037.5px;top:995.6px;font-size:13.8px;color:#868686;letter-spacing:-0.01px">Dec 5, 2025</div>
<div id="tint"></div>
</div></div>
<div id="fade"></div>
<div id="hlwrap">
<div id="glass"></div><div class="abs" style="left:530px;top:641px;width:130px;height:12px;background:radial-gradient(ellipse 60px 9px at 60px 10px,rgba(60,200,110,.33),rgba(60,200,110,0))"></div><div id="glassb"></div><div id="hl"></div><div class="hcb"></div>
<svg class="abs" style="left:503.0px;top:574.0px" width="34.0" height="34.0" viewBox="0 0 24 24" ><circle cx="12" cy="12" r="11.5" fill="#fff"/><path fill="#1ed760" d="M12 0C5.4 0 0 5.4 0 12s5.4 12 12 12 12-5.4 12-12S18.66 0 12 0zm5.521 17.34c-.24.359-.66.48-1.021.24-2.82-1.74-6.36-2.101-10.561-1.141-.418.122-.779-.179-.899-.539-.12-.421.18-.78.54-.9 4.56-1.021 8.52-.6 11.64 1.32.42.18.479.659.301 1.02zm1.44-3.3c-.301.42-.841.6-1.262.3-3.239-1.98-8.159-2.58-11.939-1.38-.479.12-1.02-.12-1.14-.6-.12-.48.12-1.021.6-1.141C9.6 9.9 15 10.561 18.72 12.84c.361.181.54.78.241 1.2zm.12-3.36C15.24 8.4 8.82 8.16 5.16 9.301c-.6.179-1.2-.181-1.38-.721-.18-.601.18-1.2.72-1.381 4.26-1.26 11.28-1.02 15.721 1.621.539.3.719 1.02.419 1.56-.299.421-1.02.599-1.559.3z"/></svg>
<svg class="abs" style="left:1017.0px;top:566.3px" width="20.6" height="20.6" viewBox="0 0 16.500 16.500" ><g fill="#d3d3d3"><path d="M10 0.0Q11.15 5.15 16.3 6.3Q11.15 7.449999999999999 10 12.6Q8.85 7.449999999999999 3.7 6.3Q8.85 5.15 10 0.0Z"/><path d="M4 8.6Q4.8 11.7 7.9 12.5Q4.8 13.3 4 16.4Q3.2 13.3 0.10000000000000009 12.5Q3.2 11.7 4 8.6Z"/></g></svg>
<svg class="abs" style="left:1539.7px;top:581.4px" width="19.2" height="18.8" viewBox="0 0 19 19" ><g fill="#cdcdcd"><circle cx="2.4" cy="2.3" r="2.3"/><rect x="0.4" y="6.4" width="4" height="12.6"/><path d="M7.3 6.4h3.8v1.8c.7-1.2 2-2.1 3.9-2.1 3.3 0 4 2.2 4 5.2V19h-4v-6.8c0-1.5-.3-2.6-1.7-2.6-1.500 0-2 1.100-2 2.600V19h-4z"/></g></svg>
<svg class="abs" style="left:1586.9px;top:581.6px" width="20.2" height="18.7" viewBox="0 0 20 19" ><path fill="#49494c" d="M2.6 0h14.800a2.600 2.600 0 0 1 2.600 2.600v10.400a2.600 2.600 0 0 1 -2.600 2.600H10.200L5.600 19v-3.400H2.600a2.600 2.600 0 0 1 -2.600 -2.600V2.600a2.600 2.600 0 0 1 2.600 -2.600z"/><rect x="4.600" y="5" width="10.600" height="2" fill="#f2f5f4"/><rect x="4.600" y="8.800" width="7" height="2" fill="#f2f5f4"/></svg>
<svg class="abs" style="left:1636.0px;top:581.6px" width="18.4" height="18.4" viewBox="3 3 18 18" ><path fill="#cdcdcd" d="M6.62 10.790c1.440 2.830 3.760 5.140 6.590 6.590l2.200-2.200c.27-.27.67-.36 1.020-.24 1.120.37 2.330.57 3.570.57.55 0 1 .45 1 1V20c0 .55-.45 1-1 1-9.390 0-17-7.610-17-17 0-.55.45-1 1-1h3.500c.55 0 1 .45 1 1 0 1.250.2 2.450.57 3.570.11.35.03.74-.25 1.020l-2.200 2.200z"/></svg>
<svg class="abs" style="left:1682.7px;top:582.1px" width="20.4" height="17.3" viewBox="0 0 20 17" ><rect x="0" y="0" width="20" height="17" rx="1" fill="#49494c"/><path d="M4.200 5.200l5.800 4 5.800-4" fill="none" stroke="#f2f5f4" stroke-width="1.500"/></svg>
<svg class="abs" style="left:1730.7px;top:583.5px" width="20.6" height="14.6" viewBox="0 0 22 15" ><path fill="#49494c" d="M11 0C6 0 2.200 3.300 0 7.500C2.200 11.700 6 15 11 15C16 15 19.800 11.700 22 7.500C19.800 3.300 16 0 11 0z"/><circle cx="11" cy="7.500" r="3.300" fill="#f2f5f4"/></svg>
<div class="t" style="left:204.5px;top:569.0px;font-size:21.6px;color:#0c0c0c;letter-spacing:0.51px;-webkit-text-stroke:0.6px #0c0c0c">Liam Carter</div>
<div class="t" style="left:204.5px;top:601.9px;font-size:16.2px;color:#757575;letter-spacing:0.20px">Digital Marketing</div>
<div class="t" style="left:548.2px;top:580.8px;font-size:20px;color:#202020;letter-spacing:0.31px;-webkit-text-stroke:0.3px #202020">Spotify</div>
<div class="t" style="left:835.6px;top:581.6px;font-size:19.6px;color:#0b5e4f;letter-spacing:-0.07px;-webkit-text-stroke:0.3px #0b5e4f">High</div>
<div class="t" style="left:1053.2px;top:567.3px;font-size:19.6px;color:#262626;letter-spacing:-0.14px;-webkit-text-stroke:0.1px #262626">Exploring features, trials, and pricing.</div>
<div class="t" style="left:1053.4px;top:600.3px;font-size:16.4px;color:#b4b4b4;letter-spacing:0.04px">Today</div>
</div>
</body>
</html>
